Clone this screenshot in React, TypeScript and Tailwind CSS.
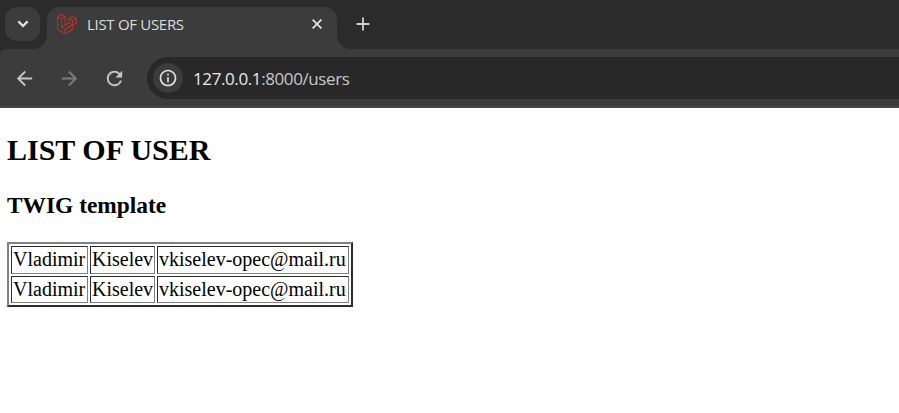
import React from "react";
import { MdAdd, MdArrowBack, MdArrowForward, MdInfoOutline, MdRefresh } from "react-icons/md";
import { SiLaravel } from "react-icons/si";

const users = [
  { first: "Vladimir", last: "Kiselev", email: "vkiselev-opec@mail.ru" },
  { first: "Vladimir", last: "Kiselev", email: "vkiselev-opec@mail.ru" },
];

function TabStrip() {
  return (
    <div className="flex h-[49px] items-end bg-[#2b2b2b]">
      <button className="relative z-10 mb-2 ml-[5px] flex h-[34px] w-[35px] shrink-0 items-center justify-center rounded-xl bg-[#3c3c3c]">
        <svg width="12" height="8" viewBox="0 0 12 8" fill="none" stroke="#e3e3e3" strokeWidth="2.2">
          <path d="M1.4 1.4 6 6l4.6-4.6" />
        </svg>
      </button>
      <span className="-ml-[7px] h-[14px] w-[14px] shrink-0 bg-[#3c3c3c]">
        <span className="block h-full w-full rounded-br-[14px] bg-[#2b2b2b]" />
      </span>
      <div className="flex h-[42px] w-[290px] shrink-0 items-center rounded-t-[13px] bg-[#3c3c3c] pr-[15px] pb-2 pl-[10px]">
        <SiLaravel size={20} color="#ef2d21" stroke="#ef2d21" strokeWidth={0.2} />
        <span className="ml-[10px] flex-1 font-['Open_Sans','Noto_Sans',sans-serif] text-[15px] leading-5 tracking-[-0.3px] whitespace-nowrap text-[#dedede]">
          LIST OF USERS
        </span>
        <svg width="10" height="10" viewBox="0 0 10 10" fill="none" stroke="#e3e3e3" strokeWidth="1.8">
          <path d="m.6.6 8.8 8.8M9.4.6.6 9.4" />
        </svg>
      </div>
      <span className="h-[14px] w-[14px] shrink-0 bg-[#3c3c3c]">
        <span className="block h-full w-full rounded-bl-[14px] bg-[#2b2b2b]" />
      </span>
      <MdAdd className="mb-[14px] ml-[1px]" size={22} color="#d0d0d0" />
    </div>
  );
}

function Toolbar() {
  return (
    <div className="bg-[#2b2b2b]">
      <div className="flex h-[59px] rounded-tl-[6px] border-b-2 border-[#484848] bg-[#3c3c3c] pt-2 pl-[13px]">
        <div className="flex h-[42px] w-[134px] shrink-0 items-center gap-[22px]">
          <MdArrowBack size={23} color="#c7c7c7" />
          <MdArrowForward size={23} color="#7c7c7c" />
          <MdRefresh size={23} color="#c7c7c7" />
        </div>
        <div className="flex h-[42px] flex-1 items-center rounded-l-full bg-[#282828] pl-[6px]">
          <span className="flex h-[30px] w-[30px] items-center justify-center rounded-full bg-[#3c3c3c]">
            <MdInfoOutline size={20} color="#e3e3e3" />
          </span>
          <span className="mt-[2px] ml-[10px] font-['Open_Sans','Noto_Sans',sans-serif] text-[17px] leading-6 tracking-[-0.4px] text-[#c7c7c7]">
            <span className="text-[#e8e8e8]">127.0.0.1</span>:8000/users
          </span>
        </div>
      </div>
    </div>
  );
}

function UserTable() {
  return (
    <table className="mt-[23px] h-[65px] w-[346px] table-fixed border-separate border-spacing-[2px] border-2 border-t-[#808080] border-r-[#2c2c2c] border-b-[#2c2c2c] border-l-[#808080] text-[20px] leading-[22px]">
      <colgroup>
        <col className="w-[77px]" />
        <col className="w-[65px]" />
        <col className="w-[192px]" />
      </colgroup>
      <tbody>
        {users.map((user, index) => (
          <tr key={index} className="h-[28px] last:h-[27px]">
            {[user.first, user.last, user.email].map((value) => (
              <td
                key={value}
                className="border border-t-[#2c2c2c] border-r-[#808080] border-b-[#808080] border-l-[#2c2c2c] px-px pt-0 pb-[2px] whitespace-nowrap"
              >
                {value}
              </td>
            ))}
          </tr>
        ))}
      </tbody>
    </table>
  );
}

export default function App() {
  return (
    <div className="h-[413px] w-[899px] overflow-hidden bg-white">
      <TabStrip />
      <Toolbar />
      <main className="pt-[25px] pl-[7px] font-['Liberation_Serif','Times_New_Roman',serif] text-black">
        <h1 className="text-[30px] leading-[34px] font-bold">LIST OF USER</h1>
        <h2 className="mt-[25px] text-[23.4px] leading-[27px] font-bold">TWIG template</h2>
        <UserTable />
      </main>
    </div>
  );
}
